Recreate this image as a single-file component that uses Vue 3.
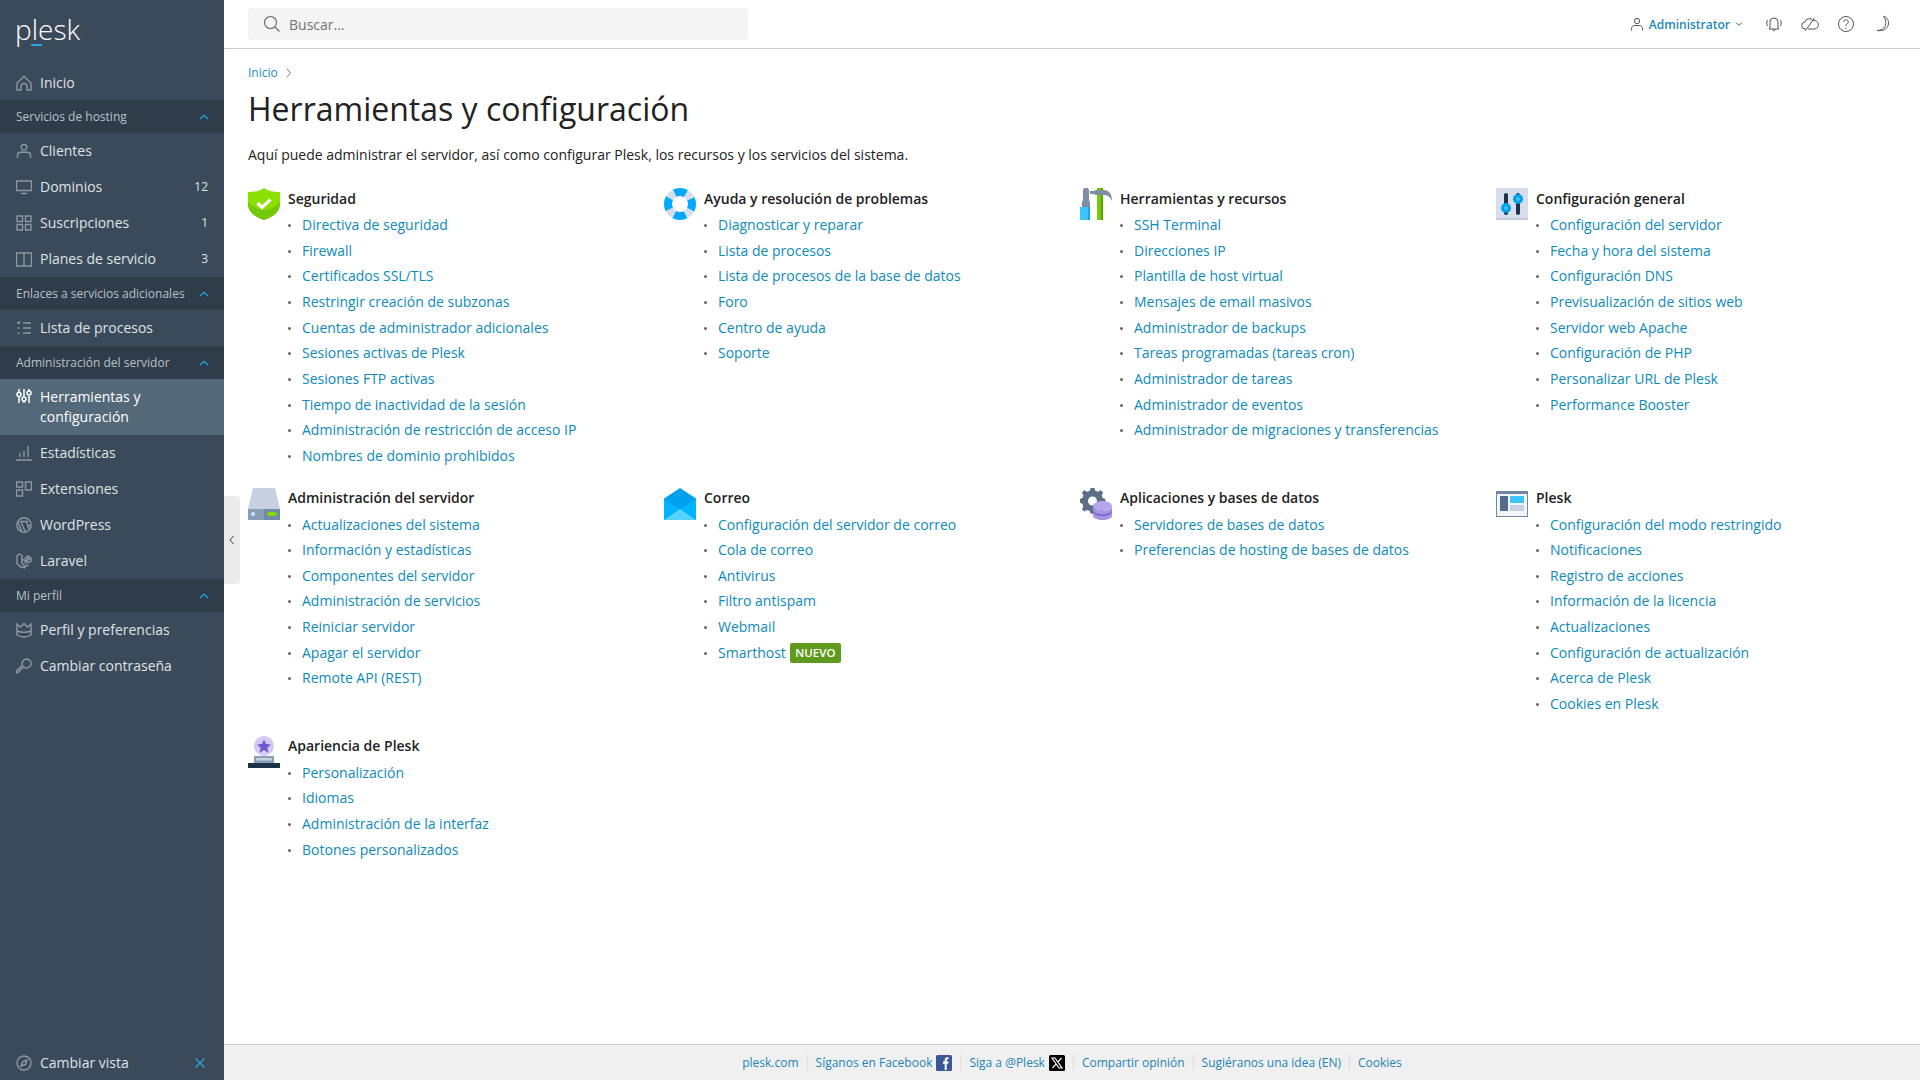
<template>
  <div class="page">
    <aside class="sidebar">
      <div class="logo"><span>p</span><span class="logo-l">l</span><span>esk</span></div>

      <template v-for="(entry, i) in nav" :key="i">
        <div v-if="entry.section" class="nav-section">
          <span>{{ entry.section }}</span>
          <svg class="section-chevron" width="12" height="12" viewBox="0 0 12 12"><path d="M2 8l4-3.6L10 8" /></svg>
        </div>
        <a v-else class="nav-item" :class="{ active: entry.active }">
          <svg class="nav-icon" width="16" height="16" viewBox="0 0 16 16">
            <path v-for="d in navIcons[entry.icon]" :key="d" :d="d" />
          </svg>
          <span class="nav-label">{{ entry.label }}</span>
          <span v-if="entry.count" class="nav-count">{{ entry.count }}</span>
        </a>
      </template>

      <div class="nav-bottom">
        <svg class="nav-icon" width="16" height="16" viewBox="0 0 16 16">
          <circle cx="8" cy="8" r="7" />
          <path d="M5 11l1.6-4.2L11 5l-1.6 4.4z" />
        </svg>
        <span class="nav-label">Cambiar vista</span>
        <svg class="close-icon" width="12" height="12" viewBox="0 0 12 12"><path d="M1.5 1.5l9 9M10.5 1.5l-9 9" /></svg>
      </div>
    </aside>

    <div class="collapse-handle">
      <svg width="8" height="10" viewBox="0 0 8 10"><path d="M5.5 1L2 5l3.5 4" /></svg>
    </div>

    <div class="main">
      <header class="topbar">
        <div class="search">
          <svg width="18" height="18" viewBox="0 0 18 18"><circle cx="7.5" cy="7.5" r="6" /><path d="M12 12l4.5 4.5" /></svg>
          <span class="search-text">Buscar...</span>
        </div>
        <div class="top-actions">
          <a class="user">
            <svg width="14" height="14" viewBox="0 0 14 14"><circle cx="7" cy="4" r="2.7" /><path d="M1.5 13.5v-2c0-1.6 1.2-3 3-3h5c1.8 0 3 1.4 3 3v2" /></svg>
            <span class="user-name">Administrator</span>
            <svg class="user-chevron" width="8" height="8" viewBox="0 0 8 8"><path d="M1 2.5L4 5.5l3-3" /></svg>
          </a>
          <svg class="top-icon" viewBox="0 0 18 18"><path d="M5 13V7a4 4 0 018 0v6l1 1H4zM7.5 14.5a1.6 1.6 0 003 0M2.5 5C1.5 7 1.5 9 2.5 11M15.5 5c1 2 1 4 0 6" /></svg>
          <svg class="top-icon" viewBox="0 0 18 18"><path d="M5 14H4.500a3.500 3.500 0 01-.5-7A4.500 4.500 0 0112 5.500a4 4 0 012 8.500H7M13.500 3L4.500 15.500" /></svg>
          <svg class="top-icon" viewBox="0 0 18 18"><circle cx="9" cy="9" r="7.500" /><path d="M6.800 7a2.200 2.200 0 114 1.200C10 9.200 9 9.400 9 11M9 12.500v1.200" /></svg>
          <svg class="top-icon" viewBox="0 0 18 18"><path d="M10.500 1c3.500 1.500 5.500 4.500 5 8-.6 4-4.500 7.500-11.500 6.500 3.500 0 8.500-2 8.800-7 .2-3-1-5.500-2.300-7.500z" /></svg>
        </div>
      </header>

      <main class="content">
        <div class="breadcrumb">
          <a>Inicio</a>
          <svg width="8" height="10" viewBox="0 0 8 10"><path d="M2 1l3.500 4L2 9" /></svg>
        </div>
        <h1>Herramientas y configuración</h1>
        <p class="intro">Aquí puede administrar el servidor, así como configurar Plesk, los recursos y los servicios del sistema.</p>

        <div class="groups">
          <section v-for="group in groups" :key="group.title" class="group">
            <svg class="group-icon" width="32" height="32" viewBox="0 0 32 32">
              <template v-if="group.icon === 'shield'">
                <path d="M16 0c4 3 9 4 16 4v12c0 8-7 13-16 16C7 29 0 24 0 16V4c7 0 12-1 16-4z" fill="#8be000" />
                <path d="M16 32C7 29 0 24 0 16v-2c6 6 12 8 16 8 6 0 11-3 16-8v2c0 8-7 13-16 16z" fill="#74c80a" />
                <path d="M9.500 15l4.500 4.500 8.500-8" fill="none" stroke="#fff" stroke-width="3.200" />
              </template>
              <template v-else-if="group.icon === 'help'">
                <circle cx="16" cy="16" r="12" fill="none" stroke="#d5deea" stroke-width="8" />
                <circle cx="16" cy="16" r="12" fill="none" stroke="#00a9ff" stroke-width="8" stroke-dasharray="11.500 7.350" stroke-dashoffset="5.750" />
              </template>
              <template v-else-if="group.icon === 'tools'">
                <path d="M4 0h4l1 2v10l1 2v6H2v-6l1-2V2z" fill="#7f8ea3" />
                <rect y="19" x="0" width="10" height="13" fill="#3cc5ff" />
                <rect y="19" x="8" width="2" height="13" fill="#1aa6ee" />
                <rect x="17" y="0" width="6" height="32" fill="#7ac70c" />
                <rect x="21" y="0" width="2" height="32" fill="#5da308" />
                <path d="M10 3h4l2-1h8c4 0 8 3 8 11-2-4-4-6-8-6h-9l-1-1h-4z" fill="#7f8ea3" />
              </template>
              <template v-else-if="group.icon === 'config'">
                <rect width="32" height="32" fill="#d5deea" />
                <rect y="30" width="32" height="2" fill="#c2cddc" />
                <rect x="8" y="5" width="4" height="22" rx="2" fill="#1c3248" />
                <rect x="20" y="5" width="4" height="22" rx="2" fill="#1c3248" />
                <circle cx="10" cy="20" r="5" fill="#00a0f0" />
                <circle cx="22" cy="11" r="5" fill="#00a0f0" />
                <circle cx="10" cy="20" r="2" fill="#3cc5ff" />
                <circle cx="22" cy="11" r="2" fill="#3cc5ff" />
              </template>
              <template v-else-if="group.icon === 'server'">
                <path d="M5 0h22l5 21H0z" fill="#c6d0e0" />
                <rect y="21" width="16" height="11" fill="#8a9db6" />
                <rect x="16" y="21" width="16" height="11" fill="#718aa6" />
                <circle cx="5" cy="26" r="2" fill="#bfe8ff" />
                <rect x="19" y="24" width="10" height="4" rx="2" fill="#84d80a" />
              </template>
              <template v-else-if="group.icon === 'mail'">
                <path d="M16 0l16 10.500V32H0V10.500z" fill="#00a0ee" />
                <path d="M0 11l16 10.500L32 11v21H0z" fill="#00b5ff" />
                <path d="M0 32l16-11 16 11z" fill="#57d2ff" />
              </template>
              <template v-else-if="group.icon === 'apps'">
                <path d="M10 0h4l1 3 3 1 3-1.500 2.500 2.500L22 8l1 3 3 1v4l-3 1-1 3 1.500 3-2.500 2.500-3-1.500-3 1-1 3h-4l-1-3-3-1-3 1.500L.5 23 2 20l-1-3-3-1v-4l3-1 1-3L.5 5 3 2.500 6 4l3-1z" fill="#5b7086" transform="translate(1.5 0) scale(.92)" />
                <circle cx="12.500" cy="13" r="4.500" fill="#fff" />
                <ellipse cx="22.500" cy="18" rx="9.500" ry="5" fill="#b7a4ee" />
                <path d="M13 18v10c0 2.200 4.200 4 9.500 4s9.500-1.800 9.500-4V18c0 2.800-4.200 5-9.500 5S13 20.800 13 18z" fill="#a793e6" />
                <path d="M13 22c0 2.500 4.200 4.500 9.500 4.500S32 24.500 32 22v1.200c0 2.500-4.200 4.500-9.500 4.500S13 25.700 13 23.200z" fill="#6e58bf" />
              </template>
              <template v-else-if="group.icon === 'plesk'">
                <rect y="3" width="32" height="26" fill="#6f87a3" />
                <rect x="1" y="6" width="30" height="22" fill="#f2f5f9" />
                <rect x="4" y="8" width="8" height="15" fill="#526d8c" />
                <rect x="14" y="8" width="14" height="7" fill="#3cc5ff" />
                <rect x="14" y="17" width="14" height="6" fill="#c6d0e0" />
              </template>
              <template v-else>
                <circle cx="16" cy="10" r="10" fill="#d2c8f6" />
                <path d="M16 3.500l2 4.500 5 .500-3.700 3.300 1.100 4.900-4.400-2.600-4.400 2.600 1.100-4.900L9 8.500l5-.500z" fill="#6f58c9" />
                <rect x="6" y="20" width="20" height="7" fill="#8a9db6" />
                <rect x="8" y="22" width="16" height="2.500" fill="#c6d0e0" />
                <rect y="27" width="32" height="5" fill="#1c3248" />
              </template>
            </svg>
            <div class="group-body">
              <h2>{{ group.title }}</h2>
              <ul>
                <li v-for="link in group.links" :key="link">
                  <a>{{ link }}</a>
                  <span v-if="link === 'Smarthost'" class="badge">NUEVO</span>
                </li>
              </ul>
            </div>
          </section>
        </div>
      </main>

      <footer class="footer">
        <a>plesk.com</a>
        <a>Síganos en Facebook
          <svg class="social" width="16" height="16" viewBox="0 0 16 16"><rect width="16" height="16" rx="1.500" fill="#3b5998" /><path d="M8.700 15V8.800H7V6.600h1.700V5c0-1.800 1-2.800 2.600-2.800h1.200v2.100h-.8c-.8 0-1 .4-1 1.100v1.200h1.800l-.3 2.200h-1.500V15z" fill="#fff" /></svg>
        </a>
        <a>Siga a @Plesk
          <svg class="social" width="16" height="16" viewBox="0 0 16 16"><rect width="16" height="16" rx="1.500" fill="#000" /><path d="M3 3h3l7 10h-3zM12.500 3L8.800 7.200M7.200 8.900L3.500 13" fill="none" stroke="#fff" stroke-width="1.200" /></svg>
        </a>
        <a>Compartir opinión</a>
        <a>Sugiéranos una idea (EN)</a>
        <a>Cookies</a>
      </footer>
    </div>
  </div>
</template>

<script setup>
const navIcons = {
  home: ['M1 8l7-6.500L15 8v7h-4v-3.500a3 3 0 00-6 0V15H1z'],
  user: ['M8 1.500a2.800 2.800 0 110 5.600 2.800 2.800 0 010-5.600z', 'M1.500 15v-3c0-1.500 1.200-2.800 2.800-2.800h7.400c1.600 0 2.800 1.300 2.800 2.800v3'],
  monitor: ['M.5 2h15v9.500H.5z', 'M5 14.500h6'],
  grid: ['M1 1h5.500v5.500H1zM9.500 1H15v5.500H9.500zM1 9.500h5.500V15H1zM9.500 9.500H15V15H9.500z'],
  book: ['M.5 2h7.500v13H.5zM8 2h7.500v13H8z'],
  list: ['M1 2l1.500 1.500L4.500 1.500M7 3h8M1.500 8h2M7 8h8M1.500 13h2M7 13h8'],
  sliders: ['M3 1v3.500M3 9v6M8 1v7.500M8 13v2M13 1v2M13 7.500V15', 'M3 4.500a2 2 0 110 4 2 2 0 010-4zM8 9a2 2 0 110 4 2 2 0 010-4zM13 3a2 2 0 110 4 2 2 0 010-4z'],
  chart: ['M0 15h16M4 12V8M8 12V6M12 12V1'],
  ext: ['M.5 1h6v5h-6zM.5 9h6v6h-6zM9.500 1h6v8h-6z'],
  wp: ['M8 .8a7.200 7.200 0 110 14.400A7.200 7.200 0 018 .8z', 'M2 5l3.500 9M5 4.500l4 10M9 4.500h-5M12 4.500H8M10.500 5l2 5.500 1-3'],
  laravel: ['M1 2.500L3.500 1 6 2.500v8l3.500 3 3-2M1 2.500v8l3 3 5.500 1.500M6 6l3.500 2V11M9.500 8l3-1.500M9.500 4.500L12 3l3 2v3l-2.500 1.500-3-1.500V4.500zM12 3v3.500l3-1.500'],
  crown: ['M1 2l3.500 3L8 1.500 11.500 5 15 2v11c-2 1.500-4.500 2-7 2s-5-.5-7-2z', 'M1 9c4 1.500 10 1.500 14 0'],
  key: ['M10.500 1a4.500 4.500 0 11-3 7.800L2 14.500h-1.500v-1.500L6.500 7A4.500 4.500 0 0110.500 1z']
}

const nav = [
  { label: 'Inicio', icon: 'home' },
  { section: 'Servicios de hosting' },
  { label: 'Clientes', icon: 'user' },
  { label: 'Dominios', icon: 'monitor', count: 12 },
  { label: 'Suscripciones', icon: 'grid', count: 1 },
  { label: 'Planes de servicio', icon: 'book', count: 3 },
  { section: 'Enlaces a servicios adicionales' },
  { label: 'Lista de procesos', icon: 'list' },
  { section: 'Administración del servidor' },
  { label: 'Herramientas y configuración', icon: 'sliders', active: true },
  { label: 'Estadísticas', icon: 'chart' },
  { label: 'Extensiones', icon: 'ext' },
  { label: 'WordPress', icon: 'wp' },
  { label: 'Laravel', icon: 'laravel' },
  { section: 'Mi perfil' },
  { label: 'Perfil y preferencias', icon: 'crown' },
  { label: 'Cambiar contraseña', icon: 'key' }
]

const groups = [
  {
    title: 'Seguridad',
    icon: 'shield',
    links: ['Directiva de seguridad', 'Firewall', 'Certificados SSL/TLS', 'Restringir creación de subzonas', 'Cuentas de administrador adicionales', 'Sesiones activas de Plesk', 'Sesiones FTP activas', 'Tiempo de inactividad de la sesión', 'Administración de restricción de acceso IP', 'Nombres de dominio prohibidos']
  },
  {
    title: 'Ayuda y resolución de problemas',
    icon: 'help',
    links: ['Diagnosticar y reparar', 'Lista de procesos', 'Lista de procesos de la base de datos', 'Foro', 'Centro de ayuda', 'Soporte']
  },
  {
    title: 'Herramientas y recursos',
    icon: 'tools',
    links: ['SSH Terminal', 'Direcciones IP', 'Plantilla de host virtual', 'Mensajes de email masivos', 'Administrador de backups', 'Tareas programadas (tareas cron)', 'Administrador de tareas', 'Administrador de eventos', 'Administrador de migraciones y transferencias']
  },
  {
    title: 'Configuración general',
    icon: 'config',
    links: ['Configuración del servidor', 'Fecha y hora del sistema', 'Configuración DNS', 'Previsualización de sitios web', 'Servidor web Apache', 'Configuración de PHP', 'Personalizar URL de Plesk', 'Performance Booster']
  },
  {
    title: 'Administración del servidor',
    icon: 'server',
    links: ['Actualizaciones del sistema', 'Información y estadísticas', 'Componentes del servidor', 'Administración de servicios', 'Reiniciar servidor', 'Apagar el servidor', 'Remote API (REST)']
  },
  {
    title: 'Correo',
    icon: 'mail',
    links: ['Configuración del servidor de correo', 'Cola de correo', 'Antivirus', 'Filtro antispam', 'Webmail', 'Smarthost']
  },
  {
    title: 'Aplicaciones y bases de datos',
    icon: 'apps',
    links: ['Servidores de bases de datos', 'Preferencias de hosting de bases de datos']
  },
  {
    title: 'Plesk',
    icon: 'plesk',
    links: ['Configuración del modo restringido', 'Notificaciones', 'Registro de acciones', 'Información de la licencia', 'Actualizaciones', 'Configuración de actualización', 'Acerca de Plesk', 'Cookies en Plesk']
  },
  {
    title: 'Apariencia de Plesk',
    icon: 'look',
    links: ['Personalización', 'Idiomas', 'Administración de la interfaz', 'Botones personalizados']
  }
]
</script>

<style>
html,
body {
  margin: 0;
  background: #fff;
}
</style>

<style scoped>
.page {
  height: 100vh;
  display: flex;
  position: relative;
  overflow: hidden;
  font-family: 'Open Sans', 'Noto Sans', sans-serif;
  font-size: 14px;
  line-height: 20px;
  color: #222;
}

.sidebar {
  width: 224px;
  flex: none;
  display: flex;
  flex-direction: column;
  background: #3b4a5a;
  color: #dfe4e8;
}

.logo {
  height: 65px;
  flex: none;
  box-sizing: border-box;
  padding: 9px 0 0 15px;
  font-size: 28px;
  font-weight: 300;
  line-height: 40px;
  color: #fff;
}

.logo-l {
  position: relative;
}

.logo-l::after {
  content: '';
  position: absolute;
  left: -1px;
  right: -4px;
  top: 34px;
  height: 2px;
  background: #28aade;
}

.nav-section {
  height: 33px;
  flex: none;
  display: flex;
  align-items: center;
  justify-content: space-between;
  padding: 0 14px 0 16px;
  background: #2f3c49;
  font-size: 12px;
  color: #b9c2cb;
}

.section-chevron {
  fill: none;
  stroke: #28aade;
  stroke-width: 1.200;
}

.nav-item {
  min-height: 36px;
  flex: none;
  box-sizing: border-box;
  display: flex;
  align-items: center;
  gap: 8px;
  padding: 8px 16px;
}

.logo + .nav-item {
  min-height: 35px;
  padding: 7px 16px;
}

.nav-item.active {
  align-items: flex-start;
  background: #536879;
  color: #fff;
}

.nav-icon {
  flex: none;
  fill: none;
  stroke: #8c98a3;
  stroke-width: 1.400;
}

.nav-item.active .nav-icon {
  stroke: #fff;
  stroke-width: 1.500;
  margin-top: 1px;
}

.nav-label {
  flex: 1;
}

.nav-count {
  font-size: 12px;
  color: #dfe4e8;
}

.nav-bottom {
  margin-top: auto;
  height: 36px;
  display: flex;
  align-items: center;
  gap: 8px;
  padding: 0 16px;
  margin-bottom: -1px;
}

.close-icon {
  fill: none;
  stroke: #28aade;
  stroke-width: 1.100;
  margin-right: 2px;
}

.collapse-handle {
  position: absolute;
  left: 224px;
  top: 496px;
  width: 16px;
  height: 88px;
  display: grid;
  place-items: center;
  background: #ebebeb;
  border-radius: 0 4px 4px 0;
}

.collapse-handle svg {
  fill: none;
  stroke: #444;
  stroke-width: 1;
}

.main {
  flex: 1;
  min-width: 0;
  display: flex;
  flex-direction: column;
}

.topbar {
  height: 49px;
  flex: none;
  box-sizing: border-box;
  display: flex;
  align-items: center;
  justify-content: space-between;
  padding: 0 29px 0 24px;
  border-bottom: 1px solid #ccc;
}

.search {
  width: 500px;
  height: 32px;
  box-sizing: border-box;
  display: flex;
  align-items: center;
  gap: 8px;
  padding-left: 15px;
  background: #f4f4f4;
  border-radius: 4px;
  color: #737373;
}

.search-text {
  padding-top: 1px;
}

.search svg {
  fill: none;
  stroke: #666;
  stroke-width: 1.100;
}

.top-actions {
  display: flex;
  align-items: center;
  gap: 18px;
}

.user {
  display: flex;
  align-items: center;
  gap: 5px;
  margin-right: 4px;
  font-size: 12px;
  font-weight: 600;
  color: #1e88b8;
}

.user-name {
  padding-top: 1px;
}

.user svg {
  fill: none;
  stroke: #555;
  stroke-width: 1;
}

.top-icon {
  width: 18px;
  height: 18px;
  fill: none;
  stroke: #555;
  stroke-width: 1;
}

.content {
  flex: 1;
  min-height: 0;
  padding: 14px 24px 0;
}

.breadcrumb {
  display: flex;
  align-items: center;
  gap: 7px;
  font-size: 12px;
  line-height: 20px;
}

.breadcrumb a {
  color: #1b8fc0;
}

.breadcrumb svg {
  fill: none;
  stroke: #777;
  stroke-width: 1;
}

h1 {
  margin: 6px 0 0;
  font-size: 32px;
  font-weight: 400;
  line-height: 40px;
  color: #222;
}

.intro {
  margin: 16px 0 0;
}

.groups {
  display: grid;
  grid-template-columns: repeat(4, 416px);
  row-gap: 22px;
  margin-top: 23.350px;
}

.group {
  display: flex;
  gap: 8px;
}

.group-icon {
  flex: none;
}

.group-body h2 {
  margin: 0;
  padding-top: 0.500px;
  font-size: 14px;
  font-weight: 600;
  line-height: 20px;
  color: #222;
}

ul {
  list-style: none;
  margin: 6.300px 0 0;
  padding: 0 0 0 14px;
}

li {
  position: relative;
  display: flex;
  align-items: center;
  gap: 4px;
  height: 20px;
  color: #0e8abb;
}

li + li {
  margin-top: 5.630px;
}

li::before {
  content: '';
  position: absolute;
  left: -14px;
  top: 9px;
  width: 3px;
  height: 3px;
  border-radius: 50%;
  background: #666;
}

.badge {
  height: 20px;
  box-sizing: border-box;
  padding: 0 5.500px;
  background: #5f9a1c;
  border-radius: 2px;
  font-size: 11.500px;
  font-weight: 600;
  color: #fff;
}

.footer {
  height: 36px;
  flex: none;
  box-sizing: border-box;
  display: flex;
  align-items: center;
  justify-content: center;
  padding-top: 1px;
  background: #f0f0f0;
  border-top: 1px solid #ccc;
  font-size: 12px;
  color: #1c85b5;
}

.footer a {
  display: flex;
  align-items: center;
  gap: 4px;
  padding: 0 8px;
  line-height: 16px;
}

.footer a + a {
  border-left: 1px solid #ddd;
}
</style>
